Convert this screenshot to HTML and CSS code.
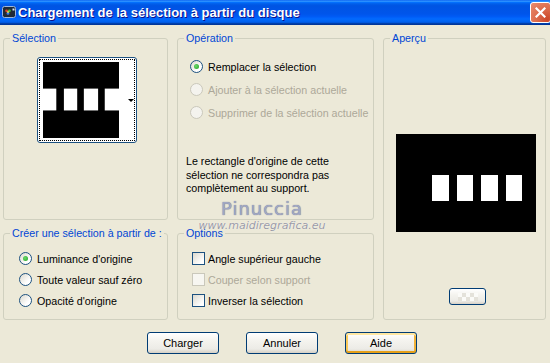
FILE: index.html
```html
<!DOCTYPE html>
<html lang="fr">
<head>
  <meta charset="UTF-8">
  <title>Chargement de la sélection à partir du disque</title>
  <link rel="stylesheet" href="styles.css">
</head>
<body>

<div class="window">
  <!-- ——— title bar ——— -->
  <header class="titlebar">
    <span class="app-icon">
      <svg width="14" height="14" viewBox="0 0 14 14">
        <rect x="0.5" y="1.5" width="13" height="11" rx="2" fill="#1d2a3a" stroke="#9fb6d8"/>
        <circle cx="6" cy="7" r="3.6" fill="#2b2b2b"/>
        <circle cx="4.6" cy="5.8" r="1.4" fill="#e0402a"/>
        <circle cx="7.4" cy="5.8" r="1.4" fill="#3fbf3f"/>
        <circle cx="6" cy="8.4" r="1.4" fill="#3a7cf0"/>
        <circle cx="6" cy="7" r="0.9" fill="#f4e04a"/>
        <rect x="10.5" y="3.5" width="2" height="2" fill="#d8e4f4"/>
      </svg>
    </span>
    <span class="title">Chargement de la sélection à partir du disque</span>
    <button class="close" aria-label="Fermer">
      <svg width="11" height="11" viewBox="0 0 11 11">
        <path d="M1.5 1.5 L9.5 9.5 M9.5 1.5 L1.5 9.5" stroke="#fff" stroke-width="2.2" stroke-linecap="square"/>
      </svg>
    </button>
  </header>

  <div class="body">
    <div class="groups">

      <fieldset class="group g-selection">
        <legend>Sélection</legend>
        <div class="thumb">
          <div class="thumb-focus">
            <svg class="thumb-img" width="80" height="80" viewBox="0 0 80 80">
              <rect width="80" height="80" fill="#000"/>
              <rect x="0" y="28" width="14" height="23" fill="#fff"/>
              <rect x="22" y="28" width="14" height="23" fill="#fff"/>
              <rect x="43" y="28" width="15" height="23" fill="#fff"/>
              <rect x="65" y="28" width="15" height="23" fill="#fff"/>
            </svg>
            <span class="thumb-arrow"></span>
          </div>
        </div>
      </fieldset>

      <fieldset class="group g-operation">
        <legend>Opération</legend>
        <div class="choices">
          <label class="choice"><span class="radio checked"></span>Remplacer la sélection</label>
          <label class="choice disabled"><span class="radio"></span>Ajouter à la sélection actuelle</label>
          <label class="choice disabled"><span class="radio"></span>Supprimer de la sélection actuelle</label>
        </div>
        <p class="note">Le rectangle d'origine de cette<br>sélection ne correspondra pas<br>complètement au support.</p>
      </fieldset>

      <fieldset class="group g-preview">
        <legend>Aperçu</legend>
        <svg class="preview-img" width="140" height="98" viewBox="0 0 140 98">
          <rect width="140" height="98" fill="#000"/>
          <rect x="36" y="41" width="17" height="26" fill="#fff"/>
          <rect x="61" y="41" width="16" height="26" fill="#fff"/>
          <rect x="85" y="41" width="17" height="26" fill="#fff"/>
          <rect x="110" y="41" width="16" height="26" fill="#fff"/>
        </svg>
        <button class="btn mini"><span class="checker"></span></button>
      </fieldset>

      <fieldset class="group g-source">
        <legend>Créer une sélection à partir de :</legend>
        <div class="choices compact">
          <label class="choice"><span class="radio checked"></span>Luminance d'origine</label>
          <label class="choice"><span class="radio"></span>Toute valeur sauf zéro</label>
          <label class="choice"><span class="radio"></span>Opacité d'origine</label>
        </div>
      </fieldset>

      <fieldset class="group g-options">
        <legend>Options</legend>
        <div class="choices compact">
          <label class="choice"><span class="check"></span>Angle supérieur gauche</label>
          <label class="choice disabled"><span class="check"></span>Couper selon support</label>
          <label class="choice"><span class="check"></span>Inverser la sélection</label>
        </div>
      </fieldset>

    </div>

    <div class="actions">
      <button class="btn">Charger</button>
      <button class="btn">Annuler</button>
      <button class="btn focused">Aide</button>
    </div>
  </div>

  <!-- watermark over the dialog -->
  <div class="watermark">
    <span class="wm-name">Pinuccia</span>
    <span class="wm-url">www.maidiregrafica.eu</span>
  </div>
</div>

</body>
</html>
```

FILE: styles.css
```css
* { box-sizing: border-box; margin: 0; padding: 0; }

body {
  font-family: "Liberation Sans", Arial, sans-serif;
  font-size: 10.7px;
  color: #000;
  background: #ece9d8;
}

.window {
  position: relative;
  width: 550px;
  height: 363px;
  background: #ece9d8;
  overflow: hidden;
}

/* ——— title bar ——— */
.titlebar {
  height: 25px;
  display: flex;
  align-items: center;
  padding: 0 0 0 2px;
  background: linear-gradient(to bottom,
    #0058ee 0%, #3593ff 4%, #288eff 6%, #127dff 8%, #036ffc 10%,
    #0262ee 14%, #0057e5 20%, #0054e3 24%, #0055eb 56%, #005bf5 66%,
    #026afe 76%, #0062ef 86%, #0052d6 92%, #0040ab 94%, #003092 100%);
}
.app-icon { width: 14px; height: 14px; display: flex; margin-top: -1px; }
.title {
  flex: 1;
  margin-left: 2px;
  color: #fff;
  font-weight: 700;
  font-size: 13px;
  text-shadow: 1px 1px 0 #0f1089;
  white-space: nowrap;
}
.close {
  width: 21px;
  height: 21px;
  margin-right: -1px;
  border: 1px solid #fff;
  border-radius: 3px;
  background: radial-gradient(circle at 85% 85%, #cc4628 0%, #dc6a4a 45%, #e98c6f 100%);
  display: flex;
  align-items: center;
  justify-content: center;
}

/* ——— group boxes ——— */
.body { padding: 6px 0 0 3px; }
.groups {
  display: grid;
  grid-template-columns: 165px 197px 163px;
  grid-template-rows: 189px 94px;
  column-gap: 9px;
  row-gap: 6px;
}
.group {
  min-width: 0;
  border: 1px solid #d0d0bf;
  border-radius: 3px;
  padding: 0;
}
.group legend {
  margin-left: 6px;
  padding: 0 2px;
  line-height: 14px;
  color: #0046d5;
  font-size: 10.7px;
  white-space: nowrap;
}
.g-selection { grid-column: 1; grid-row: 1; }
.g-operation { grid-column: 2; grid-row: 1; }
.g-preview   { grid-column: 3; grid-row: 1 / 3; }
.g-source    { grid-column: 1; grid-row: 2; }
.g-options   { grid-column: 2; grid-row: 2; }

/* selection thumbnail */
.thumb {
  width: 100px;
  height: 86px;
  margin: 12px 0 0 33px;
  border: 1px solid #1c5180;
  border-radius: 3px;
  background: #fff;
  padding: 1px;
}
.thumb-focus {
  height: 100%;
  border: 1px dotted #000;
  display: flex;
  align-items: center;
  padding-left: 3px;
}
.thumb-img { display: block; }
.thumb-arrow {
  margin-left: 9px;
  border-left: 3px solid transparent;
  border-right: 3px solid transparent;
  border-top: 3px solid #000;
}

/* radios & checkboxes */
.choices { padding-top: 10px; }
.choices.compact { padding-top: 8px; }
.choice {
  height: 23px;
  display: flex;
  align-items: center;
  gap: 5px;
  white-space: nowrap;
}
.compact .choice { height: 21px; }
.choice.disabled { color: #aca899; }

.radio {
  width: 13px;
  height: 13px;
  border: 1px solid #1c5180;
  border-radius: 50%;
  background: linear-gradient(135deg, #dcd9ce, #fff 70%);
  display: flex;
  align-items: center;
  justify-content: center;
}
.radio.checked::after {
  content: "";
  width: 5px;
  height: 5px;
  border-radius: 50%;
  background: radial-gradient(circle at 40% 40%, #6cd96c, #21a121);
}
.disabled .radio { border-color: #cac8bb; background: #f4f3ee; }

.check {
  width: 13px;
  height: 13px;
  border: 1px solid #1c5180;
  background: linear-gradient(135deg, #dcd9ce, #fff 80%);
}
.disabled .check { border-color: #cac8bb; background: #f7f6f1; }

.g-operation .choice { padding-left: 12px; }
.g-source .choice    { padding-left: 15px; }
.g-options .choice   { padding-left: 14px; gap: 3px; }

.note {
  margin: 31px 0 0 8px;
  line-height: 13.5px;
}

/* preview */
.preview-img { display: block; margin: 89px 0 0 12px; }

/* ——— buttons ——— */
.actions {
  display: flex;
  gap: 27px;
  padding: 12px 0 0 144px;
}
.btn {
  width: 72px;
  height: 22px;
  border: 1px solid #003c74;
  border-radius: 3px;
  background: linear-gradient(to bottom, #fff 0%, #f4f3ee 40%, #ecebe6 80%, #d6d0c5 100%);
  font-family: "Liberation Sans", Arial, sans-serif;
  font-size: 11px;
  color: #000;
}
.btn.focused {
  box-shadow: inset 0 2px 0 #ffe7a2, inset 0 -2px 0 #e5a01a, inset 2px 0 0 #f9c95a, inset -2px 0 0 #f0b23a;
}
.btn.mini {
  width: 37px;
  height: 17px;
  margin: 56px 0 0 65px;
  display: flex;
  align-items: center;
  justify-content: center;
}
.checker {
  width: 20px;
  height: 8px;
  background: repeating-conic-gradient(#e4e2da 0 25%, #fbfbf8 0 50%) 0 0 / 8px 8px;
}

/* ——— watermark ——— */
.watermark {
  position: absolute;
  left: 201px;
  top: 199px;
  display: flex;
  flex-direction: column;
  align-items: center;
  width: 122px;
  pointer-events: none;
}
.wm-name {
  font-family: "DejaVu Sans", sans-serif;
  font-size: 18px;
  letter-spacing: 1px;
  line-height: 20px;
  color: #a2a8c4;
  text-shadow: 0 0 1px #5c6486;
}
.wm-url {
  font-family: "DejaVu Sans", sans-serif;
  font-size: 11px;
  font-style: italic;
  line-height: 13px;
  color: #9a9aa6;
  text-shadow: 0 0 1px #fff;
}
```
